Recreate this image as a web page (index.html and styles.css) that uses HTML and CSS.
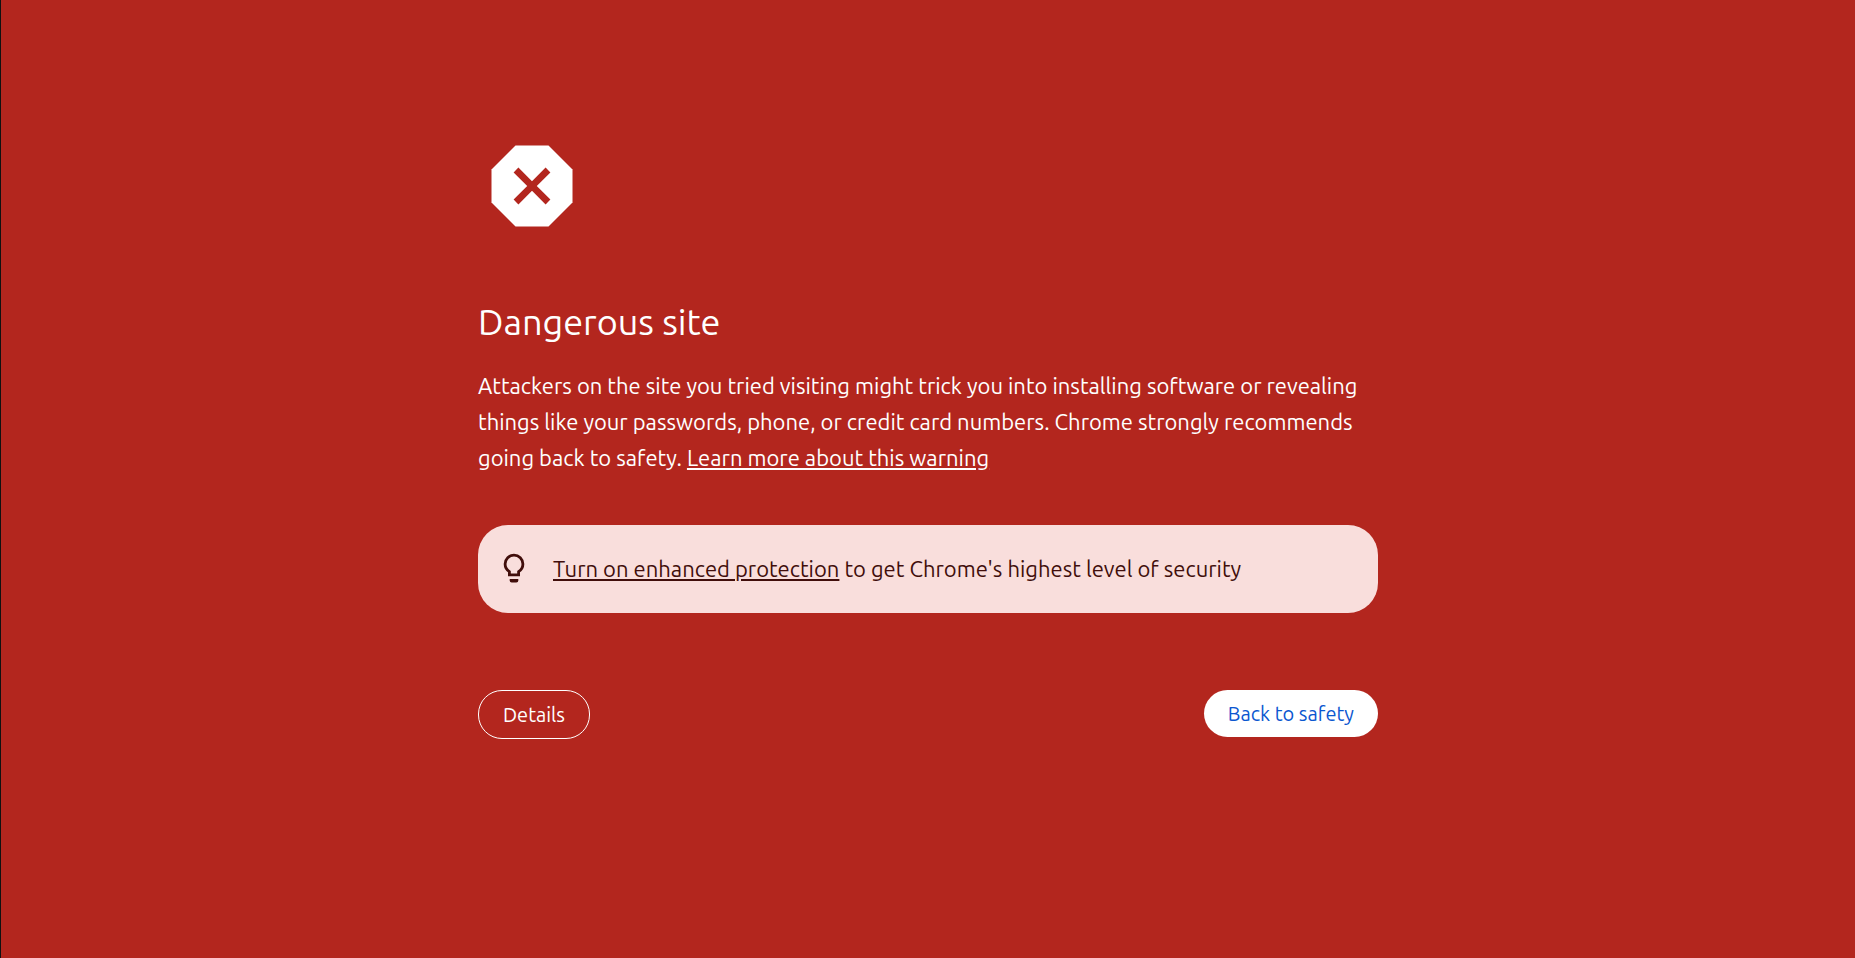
FILE: index.html
```html
<!DOCTYPE html>
<html lang="en">
<head>
    <meta charset="UTF-8">
    <meta name="viewport" content="width=device-width, initial-scale=1.0">
    <title>Security error</title>
    <link rel="stylesheet" href="styles.css">
</head>
<body>
    <main class="interstitial">
        <svg class="icon" viewBox="0 0 108 108" aria-hidden="true">
            <path fill="#fff" d="M37.5 13.5h33L94.5 37.5v33L70.5 94.5h-33L13.5 70.5v-33z"/>
            <path fill="#b3261e" d="M40.4 35.6 54 49.2 67.6 35.6 72.4 40.4 58.8 54 72.4 67.6 67.6 72.4 54 58.8 40.4 72.4 35.6 67.6 49.2 54 35.6 40.4z"/>
        </svg>

        <h1>Dangerous site</h1>
        <p class="message">Attackers on the site you tried visiting might trick you into installing software or revealing things like your passwords, phone, or credit card numbers. Chrome strongly recommends going back to safety. <a href="#">Learn more about this warning</a></p>

        <div class="enhanced">
            <svg class="bulb" viewBox="0 0 36 36" aria-hidden="true">
                <path fill="none" stroke="#410e0b" stroke-width="2.8" d="M13.4 23.9v-3.2C10.8 19 9.1 16.3 9.1 13a8.9 8.9 0 0 1 17.8 0c0 3.3-1.7 6-4.3 7.7v3.2z"/>
                <path fill="#410e0b" d="M13.7 28h8.6v1.5a2 2 0 0 1-2 2h-4.6a2 2 0 0 1-2-2z"/>
            </svg>
            <p><a href="#">Turn on enhanced protection</a> to get Chrome's highest level of security</p>
        </div>

        <div class="buttons">
            <button type="button" class="btn-details">Details</button>
            <button type="button" class="btn-safety">Back to safety</button>
        </div>
    </main>
</body>
</html>
```
FILE: styles.css
```css
* {
    box-sizing: border-box;
}

body {
    margin: 0;
    min-height: 100vh;
    background-color: #b3261e;
    border-left: 1px solid #111;
    color: white;
    font-family: Ubuntu, "Open Sans", "Noto Sans", sans-serif;
    font-size: 22px;
    line-height: 36px;
}

.interstitial {
    max-width: 900px;
    margin: 0 auto;
    padding-top: 132px;
}

.icon {
    display: block;
    width: 108px;
    height: 108px;
}

h1 {
    margin: 60px 0 24px;
    font-size: 36px;
    font-weight: 400;
    line-height: 44px;
}

p {
    margin: 0;
}

a {
    color: inherit;
}

.enhanced {
    display: flex;
    align-items: center;
    gap: 21px;
    margin-top: 49px;
    padding: 26px 18px;
    border-radius: 30px;
    background-color: #f9dedc;
    color: #410e0b;
}

.bulb {
    flex: none;
    width: 36px;
    height: 36px;
}

.buttons {
    display: flex;
    justify-content: space-between;
    align-items: flex-start;
    margin-top: 77px;
}

button {
    padding: 12px 24px;
    border: none;
    border-radius: 24px;
    font-family: inherit;
    font-size: 20px;
    line-height: 23px;
    cursor: pointer;
}

.btn-details {
    border: 1px solid white;
    background: none;
    color: white;
}

.btn-safety {
    background-color: white;
    color: #0b57d0;
}
```
